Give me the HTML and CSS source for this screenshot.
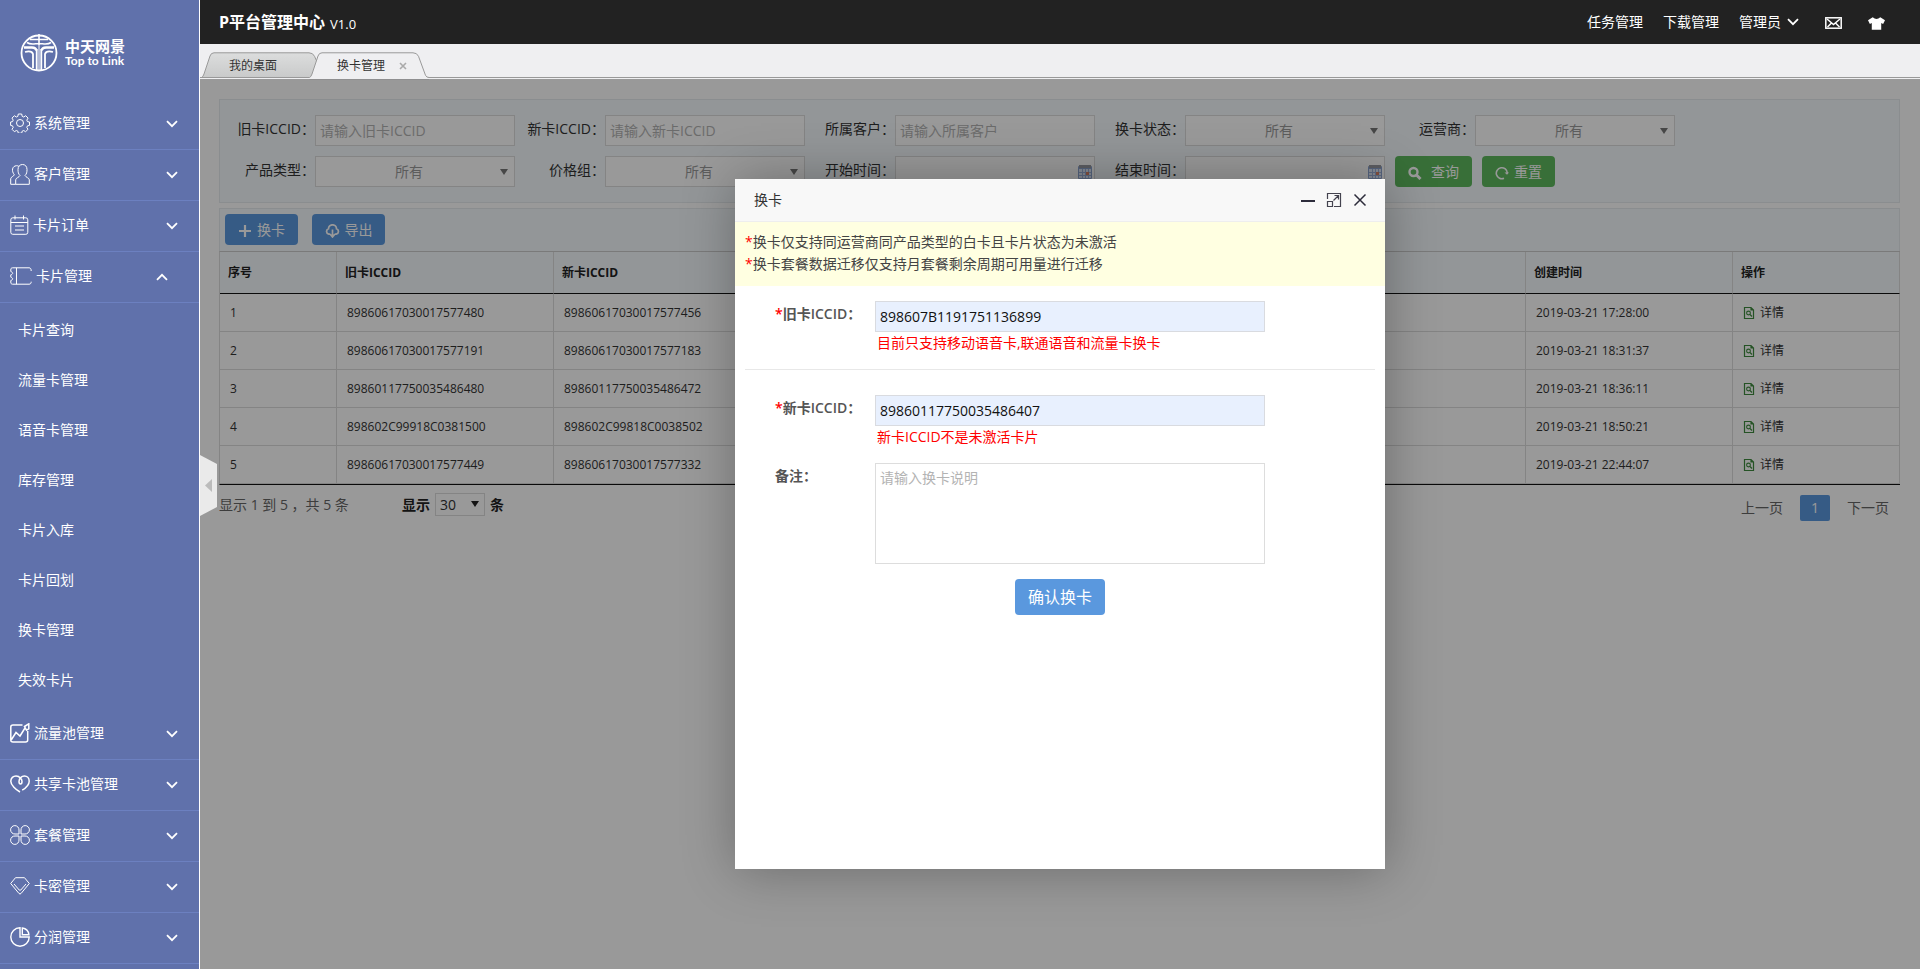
FILE: index.html
```
<!DOCTYPE html>
<html lang="zh-CN">
<head>
<meta charset="utf-8">
<title>P平台管理中心</title>
<link rel="stylesheet" href="styles.css">
</head>
<body>
<svg class="defs" aria-hidden="true">
  <symbol id="chev" viewBox="0 0 12 8"><path d="M1 1.2 6 6.2 11 1.2" fill="none" stroke="currentColor" stroke-width="1.8"/></symbol>
  <symbol id="arrow" viewBox="0 0 8 6"><path d="M0 0h8L4 6z" fill="currentColor"/></symbol>
  <symbol id="detail" viewBox="0 0 12 14"><path d="M1.5 1.5h6.500l2.500 2.500v8.500h-9zM8 1.500v2.500h2.500" fill="none" stroke="currentColor" stroke-width="1.200"/><circle cx="5.500" cy="7" r="1.900" fill="none" stroke="currentColor" stroke-width="1.100"/><path d="M7 8.500l2 2" stroke="currentColor" stroke-width="1.200"/></symbol>
  <symbol id="cal" viewBox="0 0 14 14"><rect x="0" y="1" width="14" height="13" rx="1" fill="#8ea6d0"/><rect x="1" y="0" width="12" height="3" fill="#9a9ca4"/><rect x="1" y="4" width="12" height="9" fill="#dfe8f7"/><path d="M1 7.500h12M1 10.500h12M4.500 4v9M7.500 4v9M10.500 4v9" stroke="#9db3da"/><rect x="8" y="7" width="3" height="3" fill="#d98468"/></symbol>
</svg>

<aside class="side">
  <div class="logo">
    <svg width="38" height="40" viewBox="0 0 38 40" fill="none" stroke="#fff">
      <circle cx="19" cy="20" r="17.500" stroke-width="1.800"/>
      <path d="M19 1v11M10 6.500h18M7 9.500c4 3 8 1 12 1s8 2 12-1" stroke-width="1.600"/>
      <path d="M4 14.500h8c3 0 4 1 4.500 3M34 14.500h-8c-3 0-4 1-4.500 3" stroke-width="2.400"/>
      <path d="M5 19c4-1 7-1 8 2v14M33 19c-4-1-7-1-8 2v14" stroke-width="1.800"/>
      <path d="M16.700 16v21M21.300 16v21" stroke-width="1.800"/>
      <path d="M19 12v26" stroke-width="1"/>
    </svg>
    <div class="brand"><strong>中天网景</strong><span>Top to Link</span></div>
  </div>
  <nav>
    <button class="nav"><svg width="20" height="20" viewBox="0 0 20 20" class="line"><circle cx="10" cy="10" r="3.500"/><path d="M8.300 1h3.400l.5 2.400 1.500.6 2-1.300 2.400 2.400-1.300 2 .6 1.500 2.100.4v3.400l-2.100.5-.6 1.500 1.200 1.900-2.400 2.400-1.900-1.200-1.500.6-.5 2.100H8.300l-.5-2.100-1.500-.6-1.900 1.200L2 16.300l1.200-1.900-.6-1.500L.6 12.400V9l2-.4.6-1.500-1.200-2 2.400-2.400 1.900 1.300 1.500-.6z"/></svg><span>系统管理</span><svg class="chev"><use href="#chev"/></svg></button>
    <button class="nav"><svg width="20" height="22" viewBox="0 0 20 22" class="line"><path d="M5.700 21.300h13.600v-4.500c0-1.800-3.500-2.500-4.300-4.300 1.700-1.500 2-3.500 2-6 0-3.200-1.900-5-4.500-5S8 3.300 8 6.500c0 2.500.4 4.500 2 6-.8 1.800-4.300 2.500-4.300 4.300zM5.700 21.300H.7v-5.500c0-1.800 3-2.300 3.600-4C1.300 8 2 3 6.500 2.700c1 0 1.500.1 2.300.6"/></svg><span>客户管理</span><svg class="chev"><use href="#chev"/></svg></button>
    <button class="nav"><svg width="19" height="20" viewBox="0 0 19 20" class="line"><rect x=".8" y="2.800" width="17" height="16.500" rx="2"/><path d="M5 .5v4M13.500 .5v4M.8 7.500h17M5 11h9M5 15h9"/></svg><span>卡片订单</span><svg class="chev"><use href="#chev"/></svg></button>
    <button class="nav open" aria-expanded="true"><svg width="22" height="18" viewBox="0 0 22 18" class="line"><path d="M19 .8H2.500C1.300.8.800 1.500.800 3v1.500c2.500 1 2.500 2.500 0 3.300v2.400c2.500 1 2.500 2.500 0 3.300V15c0 1.500.5 2.200 1.700 2.200H19c1.500 0 2.200-.8 2.200-2.500M21.200 4C21.200 1.800 20.500.8 19 .8M6.500.8v16.400"/></svg><span>卡片管理</span><svg class="chev"><use href="#chev"/></svg></button>
    <ul class="sub">
      <li><a href="#">卡片查询</a></li><li><a href="#">流量卡管理</a></li><li><a href="#">语音卡管理</a></li><li><a href="#">库存管理</a></li><li><a href="#">卡片入库</a></li><li><a href="#">卡片回划</a></li><li><a href="#">换卡管理</a></li><li><a href="#">失效卡片</a></li>
    </ul>
    <button class="nav"><svg width="20" height="20" viewBox="0 0 20 20" class="line bold"><path d="M12.500 2H3C1.500 2 .8 2.700.8 4v13c0 1.300.7 2 2.200 2h12.500c1.500 0 2.200-.7 2.200-2V8M1.500 16.500l4.500-7 4 3.500 5-8M14.500 3.500 18.800.8v5l-2.300 1.400z"/></svg><span>流量池管理</span><svg class="chev"><use href="#chev"/></svg></button>
    <button class="nav"><svg width="20" height="18" viewBox="0 0 20 18" class="line bold"><path d="M12.200 15.200c4-2.500 7-5.700 7-9 0-3.400-2.300-5.200-4.800-5.200C11.500 1 9 3.500 9 6.500c0 1.500.5 2.500 1.500 2.500s1.500-1 1.500-2.500S11.500 4 10.500 3.200C9.300 1.700 7.700 1 6 1 3.200 1 .8 3 .8 6.200c0 4 5.200 8.800 9.200 10.800"/></svg><span>共享卡池管理</span><svg class="chev"><use href="#chev"/></svg></button>
    <button class="nav"><svg width="20" height="20" viewBox="0 0 20 20" class="line"><path d="M9 9H5A4.200 4.200 0 1 1 9 5zM11 9V5a4.200 4.200 0 1 1 4 4zM9 11v4a4.200 4.200 0 1 1-4-4zM11 11h4a4.200 4.200 0 1 1-4 4z"/></svg><span>套餐管理</span><svg class="chev"><use href="#chev"/></svg></button>
    <button class="nav"><svg width="20" height="18" viewBox="0 0 20 18" class="line"><path d="M5.500.7h9l4.800 5.800L11 16.500q-1 1-2 0L.7 6.500zM4 7l5.200 6q.8.800 1.600 0L16 7"/></svg><span>卡密管理</span><svg class="chev"><use href="#chev"/></svg></button>
    <button class="nav"><svg width="20" height="20" viewBox="0 0 20 20" class="line pie"><path d="M10 .8A9.200 9.200 0 1 0 19.200 10H10zM12.300 1v6.700h6.600C18.500 4 16 1.500 12.300 1z"/></svg><span>分润管理</span><svg class="chev"><use href="#chev"/></svg></button>
  </nav>
</aside>

<div class="main">
  <header class="top">
    <h1>P平台管理中心</h1><span class="ver">V1.0</span>
    <nav class="links">
      <a href="#">任务管理</a><a href="#">下载管理</a><a href="#" class="user">管理员<svg width="12" height="8"><use href="#chev"/></svg></a>
      <a href="#" class="ico" aria-label="消息"><svg width="17" height="12" viewBox="0 0 17 12" fill="none" stroke="#fff" stroke-width="1.500"><rect x=".8" y=".8" width="15.400" height="10.400"/><path d="M2 2l6.500 5.500L15 2M2.500 10l4-4M14.500 10l-4-4"/></svg></a>
      <a href="#" class="ico" aria-label="换肤"><svg width="17" height="13" viewBox="0 0 18 13"><path d="M5 0Q9 3.500 13 0l5 3-2 4-2-1v7H4V6L2 7 0 3z" fill="#fff"/></svg></a>
    </nav>
  </header>
  <div class="tabs">
    <a href="#" class="tab"><svg class="shape" width="118" height="26" viewBox="0 0 118 26"><defs><linearGradient id="g" x2="0" y2="1"><stop offset="0" stop-color="#dcdddd"/><stop offset="1" stop-color="#c9caca"/></linearGradient></defs><path d="M.5 25.500Q2 25 3 22L9 4Q10 .8 13 .8h95q4 0 5.500 3.500L118 14v11.500z" fill="url(#g)" stroke="#999"/></svg><span>我的桌面</span></a>
    <a href="#" class="tab on"><svg class="shape" width="121" height="28" viewBox="0 0 121 28"><path d="M.5 25.500Q2 25 3 22L9 4Q10 .8 13 .8h91q4 0 5.500 3.500l7 19q1 2.200 3.500 2.200V28H.5z" fill="#efeff1"/><path d="M.5 25.500Q2 25 3 22L9 4Q10 .8 13 .8h91q4 0 5.500 3.500l7 19q1 2.200 3.500 2.200" fill="none" stroke="#999"/></svg><span>换卡管理</span><svg class="x" width="8" height="8" viewBox="0 0 8 8"><path d="M1 1l6 6M7 1 1 7" stroke="#aaa" stroke-width="1.600"/></svg></a>
  </div>

  <div class="view">
    <form class="search">
      <div class="f"><label for="a">旧卡ICCID：</label><input id="a" type="text" placeholder="请输入旧卡ICCID"></div>
      <div class="f"><label for="b">新卡ICCID：</label><input id="b" type="text" placeholder="请输入新卡ICCID"></div>
      <div class="f"><label for="c">所属客户：</label><input id="c" type="text" placeholder="请输入所属客户"></div>
      <div class="f"><label for="d">换卡状态：</label><span class="box"><select id="d"><option>所有</option></select><svg class="arr"><use href="#arrow"/></svg></span></div>
      <div class="f"><label for="e">运营商：</label><span class="box"><select id="e"><option>所有</option></select><svg class="arr"><use href="#arrow"/></svg></span></div>
      <div class="f"><label for="g1">产品类型：</label><span class="box"><select id="g1"><option>所有</option></select><svg class="arr"><use href="#arrow"/></svg></span></div>
      <div class="f"><label for="h">价格组：</label><span class="box"><select id="h"><option>所有</option></select><svg class="arr"><use href="#arrow"/></svg></span></div>
      <div class="f"><label for="i">开始时间：</label><span class="box"><input id="i" type="text"><svg class="cal"><use href="#cal"/></svg></span></div>
      <div class="f"><label for="j">结束时间：</label><span class="box"><input id="j" type="text"><svg class="cal"><use href="#cal"/></svg></span></div>
      <div class="f acts">
        <button type="button" class="btn green wide"><svg width="14" height="14" viewBox="0 0 14 14" fill="none" stroke="#fff"><circle cx="5.500" cy="6" r="4" stroke-width="2.400"/><path d="M8.500 9l4 4" stroke-width="3"/></svg>查询</button>
        <button type="button" class="btn green"><svg width="14" height="14" viewBox="0 0 14 14" fill="none" stroke="#fff" stroke-width="1.600"><path d="M9 12.300A5.500 5.500 0 1 1 12.300 7"/><path d="M9.500 6.500h4.500l-2 2.300z" fill="#fff" stroke="none"/></svg>重置</button>
      </div>
    </form>

    <div class="tools">
      <button class="btn"><svg width="14" height="14" viewBox="0 0 14 14"><path d="M7 1v12M1 7h12" stroke="#fff" stroke-width="2.200"/></svg>换卡</button>
      <button class="btn"><svg width="15" height="14" viewBox="0 0 15 14" fill="none" stroke="#fff" stroke-width="1.700"><path d="M5 10.200H3.800A2.800 2.800 0 0 1 3.500 4.800a4 4 0 0 1 8 0 2.800 2.800 0 0 1-.3 5.400H10M7.500 5.500v7M5 10l2.500 3L10 10"/></svg>导出</button>
    </div>

    <table class="grid">
      <colgroup><col class="c1"><col class="c2"><col class="c2"><col><col class="c3"><col class="c4"></colgroup>
      <thead><tr><th>序号</th><th>旧卡ICCID</th><th>新卡ICCID</th><th></th><th>创建时间</th><th>操作</th></tr></thead>
      <tbody>
        <tr><td>1</td><td>89860617030017577480</td><td>89860617030017577456</td><td></td><td>2019-03-21 17:28:00</td><td><a href="#"><svg><use href="#detail"/></svg>详情</a></td></tr>
        <tr><td>2</td><td>89860617030017577191</td><td>89860617030017577183</td><td></td><td>2019-03-21 18:31:37</td><td><a href="#"><svg><use href="#detail"/></svg>详情</a></td></tr>
        <tr><td>3</td><td>89860117750035486480</td><td>89860117750035486472</td><td></td><td>2019-03-21 18:36:11</td><td><a href="#"><svg><use href="#detail"/></svg>详情</a></td></tr>
        <tr><td>4</td><td>898602C99918C0381500</td><td>898602C99818C0038502</td><td></td><td>2019-03-21 18:50:21</td><td><a href="#"><svg><use href="#detail"/></svg>详情</a></td></tr>
        <tr><td>5</td><td>89860617030017577449</td><td>89860617030017577332</td><td></td><td>2019-03-21 22:44:07</td><td><a href="#"><svg><use href="#detail"/></svg>详情</a></td></tr>
      </tbody>
    </table>

    <div class="foot">
      <span class="info">显示 1 到 5 ，共 5 条</span>
      <div class="size"><label for="k">显示</label><span class="box"><select id="k"><option>30</option></select><svg class="arr"><use href="#arrow"/></svg></span><span>条</span></div>
      <nav class="pages"><a href="#">上一页</a><a href="#" class="cur">1</a><a href="#">下一页</a></nav>
    </div>

    <div class="mask">
      <section class="dialog" role="dialog" aria-labelledby="dt">
        <header class="dhead">
          <h2 id="dt">换卡</h2>
          <button aria-label="最小化"><svg width="16" height="16" viewBox="0 0 16 16"><path d="M1 9h14" stroke="#2d2c3b" stroke-width="2"/></svg></button>
          <button aria-label="最大化"><svg width="16" height="16" viewBox="0 0 16 16" fill="none" stroke="#44434f"><path d="M1.500 7V1.500h13v13H8M1.500 9.500h5v5h-5zM7.500 8.500l5-5M8.500 3.500h4v4" stroke-width="1.200"/></svg></button>
          <button aria-label="关闭"><svg width="16" height="16" viewBox="0 0 16 16"><path d="M2.500 2.500l11 11M13.500 2.500l-11 11" stroke="#2d2c3b" stroke-width="1.500"/></svg></button>
        </header>
        <div class="note"><p><i>*</i>换卡仅支持同运营商同产品类型的白卡且卡片状态为未激活</p><p><i>*</i>换卡套餐数据迁移仅支持月套餐剩余周期可用量进行迁移</p></div>
        <form class="form">
          <div class="row line-b"><label for="m"><i>*</i>旧卡ICCID：</label><div class="fld"><input id="m" type="text" value="898607B1191751136899"><p class="err">目前只支持移动语音卡,联通语音和流量卡换卡</p></div></div>
          <div class="row"><label for="n"><i>*</i>新卡ICCID：</label><div class="fld"><input id="n" type="text" value="89860117750035486407"><p class="err">新卡ICCID不是未激活卡片</p></div></div>
          <div class="row"><label for="o">备注：</label><div class="fld"><textarea id="o" placeholder="请输入换卡说明"></textarea></div></div>
          <button type="button" class="submit">确认换卡</button>
        </form>
      </section>
    </div>
  </div>
  <button class="fold" aria-label="收起菜单"><svg width="17" height="61" viewBox="0 0 17 61"><path d="M0 0l17 9v43L0 61z" fill="#eaeaea"/><path d="M12 24v13l-7-6.500z" fill="#bbb"/></svg></button>
</div>
</body>
</html>
```
FILE: styles.css
```
* { box-sizing: border-box; }
body {
  margin: 0;
  height: 100vh;
  display: flex;
  overflow: hidden;
  font: 14px/20px "Open Sans", "Noto Sans CJK SC", sans-serif;
  color: #333;
  background: #fff;
}
a { color: inherit; text-decoration: none; }
button, input, select, textarea { font: inherit; color: inherit; margin: 0; }
button { border: 0; padding: 0; background: none; cursor: pointer; }
h1, h2, p, ul { margin: 0; padding: 0; list-style: none; }
i { font-style: normal; color: #f00; }
.defs { position: absolute; width: 0; height: 0; }

/* Sidebar */
.side { flex: none; width: 200px; background: #6071ab; border-right: 1px solid #fff; color: #fff; overflow: hidden; }
.logo { height: 99px; padding: 7px 0 0 20px; display: flex; align-items: center; gap: 7px; }
.brand { display: flex; flex-direction: column; }
.brand strong { font-size: 15px; line-height: 16px; }
.brand span { font: bold 12px/14px Lato, sans-serif; }
.nav {
  display: flex;
  align-items: center;
  gap: 4px;
  width: 100%;
  height: 51px;
  padding: 0 21px 2px 10px;
  border-bottom: 1px solid #6c80c0;
  text-align: left;
}
.nav span { flex: 1; }
.line { fill: none; stroke: #fff; stroke-width: 1; }
.line.bold { stroke-width: 1.5; }
.line.pie { stroke-width: 1.4; }
.chev { width: 12px; height: 8px; margin-top: 2px; }
.open { padding-right: 31px; }
.open .chev { transform: rotate(180deg); }
.sub { padding: 2px 0 4px; }
.sub a { display: block; padding-left: 18px; line-height: 50px; }

/* Top bar */
.main { flex: 1; min-width: 0; display: flex; flex-direction: column; position: relative; }
.top { flex: none; height: 44px; padding: 0 35px 0 19px; background: #222; color: #fff; display: flex; align-items: center; }
.top h1 { font-size: 16px; line-height: 24px; }
.ver { font-size: 13px; padding: 4px 0 0 5px; }
.links { margin-left: auto; display: flex; align-items: center; gap: 20px; }
.user { display: flex; align-items: center; gap: 6px; }
.links .ico { display: flex; padding: 2px 0 0 6px; }

/* Tabs */
.tabs {
  flex: none;
  height: 35px;
  padding: 8px 0 0 1px;
  display: flex;
  background: linear-gradient(#999, #999) 0 33px / 100% 1px no-repeat, #efeff1;
  font-size: 12px;
}
.tab { position: relative; width: 108px; padding-left: 28px; line-height: 28px; }
.tab.on { width: 120px; padding-left: 28px; }
.tab span { position: relative; }
.shape { position: absolute; left: 0; top: 0; }
.x { position: relative; margin-left: 14px; }

/* Page content */
.view { flex: 1; min-height: 0; position: relative; padding: 20px 20px 0 19px; }
.search {
  display: grid;
  grid-template-columns: repeat(5, 290px);
  gap: 10px 0;
  padding: 15px 0 15px 5px;
  border: 1px solid #e6ebef;
  background: #f5fafe;
}
.f { display: flex; height: 31px; }
.f label { flex: 1; text-align: right; line-height: 28px; white-space: nowrap; }
.search input, .search select { width: 200px; height: 31px; padding: 0 4px; border: 1px solid #ddd; background: #fff; border-radius: 0; outline: 0; }
.box { position: relative; display: inline-flex; }
select { appearance: none; text-align-last: center; color: #999; }
.search select { padding: 0 12px 0 0; }
::placeholder { color: #b3b3b3; }
.arr { position: absolute; right: 6px; top: 13px; width: 8px; height: 6px; color: #777; }
.search .arr { right: 7px; }
.cal { position: absolute; right: 3px; top: 9px; width: 14px; height: 14px; }
.acts { padding-left: 10px; gap: 10px; }
.acts, .tools { white-space: nowrap; }
.btn { display: flex; align-items: center; justify-content: center; gap: 5px; width: 73px; height: 31px; border-radius: 4px; background: #5a98de; color: #fff; }
.btn svg { margin-top: 2px; }
.green { background: #5eb95e; }
.wide { width: 77px; gap: 9px; }
.tools { display: flex; gap: 14px; margin-top: 5px; padding: 5px 5px 6px; border: 1px solid #e6ebef; border-bottom: 0; background: #f5fafe; }

/* Records */
.grid { width: 100%; table-layout: fixed; border-collapse: separate; border-spacing: 0; border-left: 1px solid #ddd; border-top: 1px solid #ccc; border-bottom: 1px solid #111; font-size: 12px; }
.c1 { width: 117px; }
.c2 { width: 217px; }
.c3 { width: 207px; }
.c4 { width: 167px; }
.grid th, .grid td { border-right: 1px solid #ddd; text-align: left; padding: 0 8px; }
.grid th { height: 42px; background: #f5fafe; border-bottom: 1px solid #111; color: #222; }
.grid td { height: 38px; padding: 0 10px; border-bottom: 1px solid #ddd; }
.grid td a { display: flex; align-items: center; gap: 5px; }
.grid td svg { width: 12px; height: 14px; color: #3e8a3e; }

.foot { display: flex; align-items: flex-start; padding-top: 8px; color: #666; }
.info { width: 183px; padding-top: 2px; }
.size { display: flex; gap: 5px; align-items: center; color: #222; font-weight: bold; }
.size select { width: 50px; height: 23px; padding: 0 0 0 4px; border: 1px solid #ddd; background: #fff; color: #333; border-radius: 0; font-weight: normal; text-align-last: left; }
.size .arr { top: 8px; color: #222; }
.pages { margin-left: auto; padding: 2px 11px 0 0; display: flex; gap: 17px; line-height: 26px; }
.cur { width: 30px; text-align: center; background: #5a98de; color: #fff; border-radius: 2px; }

/* Dialog */
.mask { position: absolute; inset: 0; display: flex; align-items: center; justify-content: center; background: rgba(0, 0, 0, .4); }
.dialog { width: 650px; height: 690px; max-width: 100%; max-height: 100%; background: #fff; box-shadow: 1px 1px 50px rgba(0, 0, 0, .3); }
.dhead { display: flex; align-items: center; gap: 10px; height: 43px; padding: 0 17px 0 19px; background: #f8f8f8; border-bottom: 1px solid #eee; }
.dhead h2 { flex: 1; font-size: 14px; font-weight: normal; }
.dhead svg { display: block; }
.note { padding: 9px 10px 11px; line-height: 22px; background: #ffffe1; color: #444; }
.form { padding: 15px 10px 0; display: flex; flex-direction: column; }
.row { display: flex; padding-bottom: 15px; }
.row label { width: 130px; padding-left: 30px; line-height: 26px; font-weight: 600; color: #555; white-space: nowrap; }
.line-b { margin-bottom: 25px; border-bottom: 1px solid #e8e8e8; }
.fld { width: 390px; }
.fld input { display: block; width: 100%; height: 31px; padding: 0 4px; border: 1px solid #d9dbe0; background: #e8f0fe; color: #111; }
.fld textarea { display: block; width: 100%; height: 101px; padding: 4px; border: 1px solid #ddd; resize: none; }
.err { padding-left: 2px; line-height: 22px; color: #f00; }
.submit { align-self: center; width: 90px; height: 36px; border-radius: 4px; background: #5a98de; color: #fff; font-size: 16px; }

.fold { position: absolute; left: 0; top: 455px; }
.fold svg { display: block; }
```
